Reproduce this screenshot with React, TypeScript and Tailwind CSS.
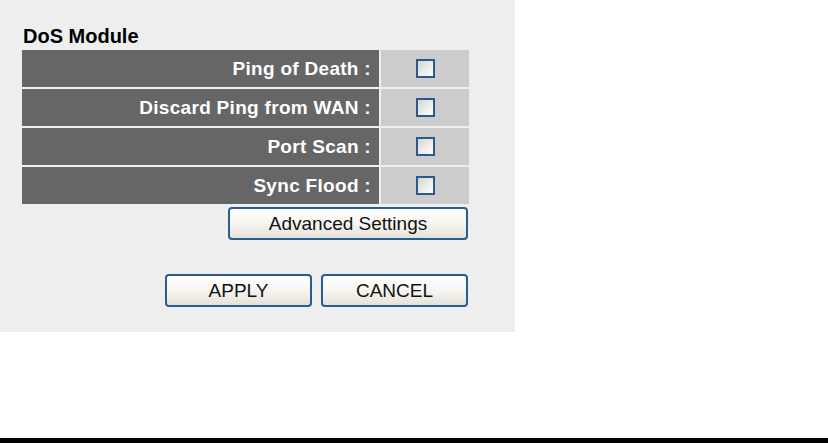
import { useState } from "react";

const rows = ["Ping of Death :", "Discard Ping from WAN :", "Port Scan :", "Sync Flood :"];

const XpButton = ({ label, className }: { label: string; className: string }) => (
    <button
        type="button"
        className={`h-[33px] rounded-[4px] border-2 border-[#2a5c92] bg-linear-to-b from-white via-[#f6f5f1] to-[#e4e2d8] text-[19px] leading-[19px] text-[#111] ${className}`}
    >
        {label}
    </button>
);

const App = () => {
    const [checked, setChecked] = useState<boolean[]>([false, false, false, false]);

    const toggle = (i: number) => {
        setChecked(prev => prev.map((v, idx) => (idx === i ? !v : v)));
    };

    return (
        <div className="flex h-[443px] w-full flex-col bg-white font-['Liberation_Sans',Arial,sans-serif]">
            <div className="h-[332px] w-[515px] bg-[#eeeeee] pl-[22px] pt-[26px]">
                <div className="flex w-[447px] flex-col">
                    <h2 className="pl-[1px] text-[20px] font-bold leading-[20px] text-black">DoS Module</h2>

                    <div className="mt-[4px] flex flex-col gap-[2px]">
                        {rows.map((label, i) => (
                            <div key={label} className="flex h-[37px] gap-[2px]">
                                <div className="flex w-[357px] items-center justify-end bg-[#666666] pr-[8px] text-[19px] font-bold leading-[19px] tracking-[0.3px] text-white">
                                    {label}
                                </div>
                                <div className="flex w-[88px] items-center justify-center bg-[#cccccc]">
                                    <input
                                        type="checkbox"
                                        checked={checked[i]}
                                        onChange={() => toggle(i)}
                                        className="ml-[1px] h-[19px] w-[19px] appearance-none border-2 border-[#2b5a8a] bg-linear-to-br from-[#d6d6d0] to-white"
                                    />
                                </div>
                            </div>
                        ))}
                    </div>

                    <div className="mt-[3px] flex justify-end pr-[1px]">
                        <XpButton label="Advanced Settings" className="w-[240px]" />
                    </div>

                    <div className="mt-[34px] flex justify-end gap-[9px] pr-[1px]">
                        <XpButton label="APPLY" className="w-[147px]" />
                        <XpButton label="CANCEL" className="w-[147px]" />
                    </div>
                </div>
            </div>

            <div className="flex-1" />
            <div className="h-[5px] w-full bg-black" />
        </div>
    );
};

export default App;
